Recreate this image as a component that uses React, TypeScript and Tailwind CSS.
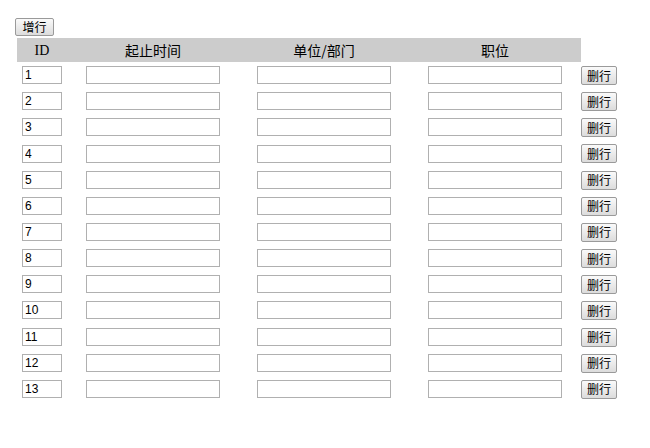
import React from "react";

const rows = Array.from({ length: 13 }, (_, i) => i + 1);

const cjk = { fontFamily: '"Noto Sans CJK SC", sans-serif' };

function Btn({ children, className = "" }: { children: React.ReactNode; className?: string }) {
  return (
    <button
      className={
        "flex items-center justify-center rounded-[2px] border border-[#9a9a9a] bg-gradient-to-b from-[#fafafa] to-[#dcdcdc] text-[12px] leading-none text-black " +
        className
      }
      style={cjk}
    >
      {children}
    </button>
  );
}

function Field({ value = "", w }: { value?: string; w: string }) {
  return (
    <input
      readOnly
      value={value}
      className={
        "h-[18px] border border-[#b0b0b0] bg-white px-[2px] text-[12px] text-black outline-none " + w
      }
      style={{ fontFamily: '"Liberation Sans", Arial, sans-serif' }}
    />
  );
}

export default function App() {
  return (
    <div className="min-h-[448px] w-[650px] bg-white pl-[15px] pt-[18px]">
      <Btn className="h-[18px] w-[39px]">增行</Btn>
      <div className="ml-[2px] mt-[2px] grid grid-cols-[50px_172px_170px_172px_39px]">
        <div
          className="flex h-[24px] items-center justify-center bg-[#cccccc] text-[14px] text-black"
          style={{ fontFamily: '"Liberation Serif", serif' }}
        >
          ID
        </div>
        <div className="flex h-[24px] items-center justify-center bg-[#cccccc] text-[14px] text-black" style={cjk}>
          起止时间
        </div>
        <div className="flex h-[24px] items-center justify-center bg-[#cccccc] text-[14px] text-black" style={cjk}>
          单位/部门
        </div>
        <div className="flex h-[24px] items-center justify-center bg-[#cccccc] text-[14px] text-black" style={cjk}>
          职位
        </div>
        <div />
        {rows.map((n) => (
          <React.Fragment key={n}>
            <div className="flex h-[26.17px] items-center justify-center">
              <Field value={String(n)} w="w-[40px]" />
            </div>
            <div className="flex h-[26.17px] items-center justify-center">
              <Field w="w-[134px]" />
            </div>
            <div className="flex h-[26.17px] items-center justify-center">
              <Field w="w-[134px]" />
            </div>
            <div className="flex h-[26.17px] items-center justify-center">
              <Field w="w-[134px]" />
            </div>
            <div className="flex h-[26.17px] items-start pt-[4px]">
              <Btn className="h-[19px] w-[36px]">删行</Btn>
            </div>
          </React.Fragment>
        ))}
      </div>
    </div>
  );
}
